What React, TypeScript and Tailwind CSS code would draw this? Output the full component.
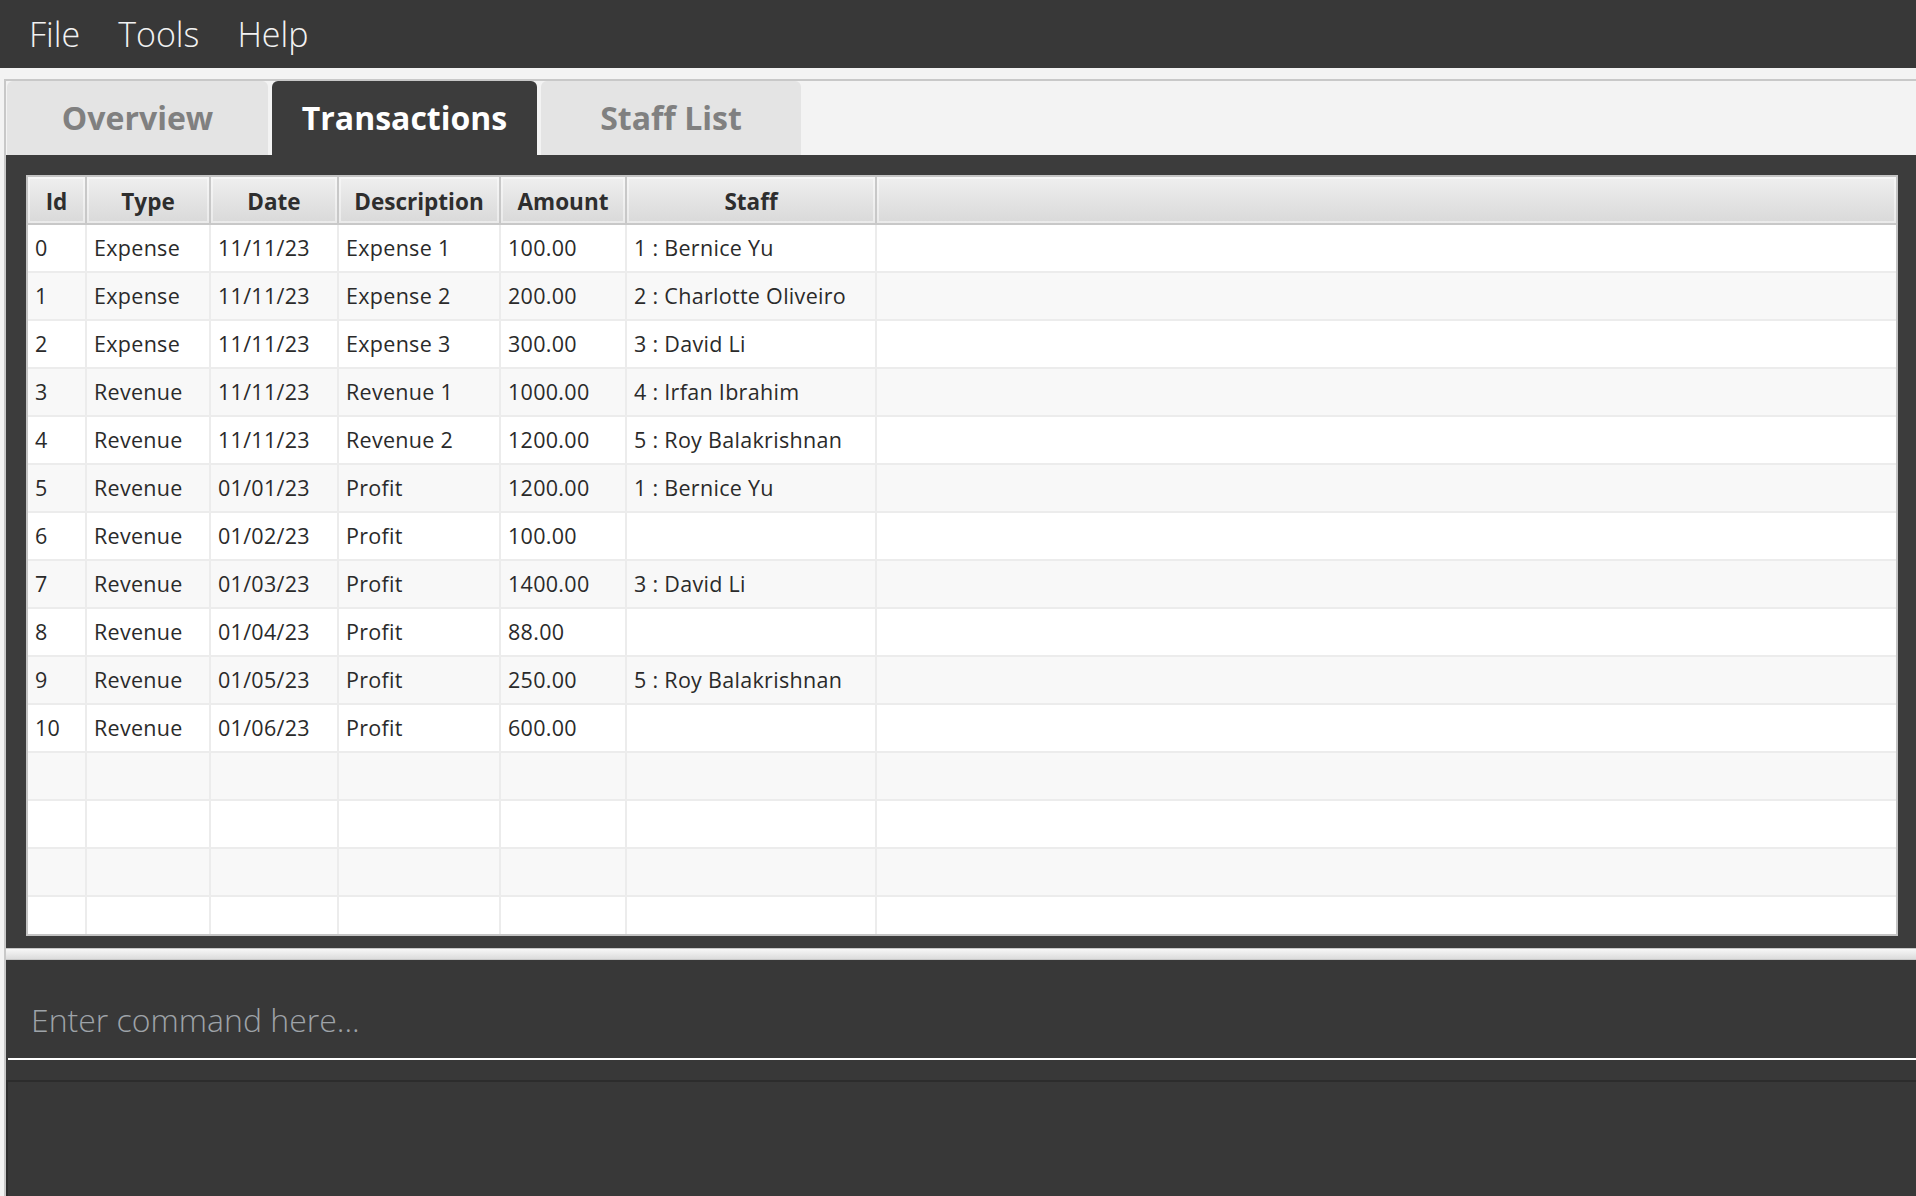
const rows = [
  ["0", "Expense", "11/11/23", "Expense 1", "100.00", "1 : Bernice Yu"],
  ["1", "Expense", "11/11/23", "Expense 2", "200.00", "2 : Charlotte Oliveiro"],
  ["2", "Expense", "11/11/23", "Expense 3", "300.00", "3 : David Li"],
  ["3", "Revenue", "11/11/23", "Revenue 1", "1000.00", "4 : Irfan Ibrahim"],
  ["4", "Revenue", "11/11/23", "Revenue 2", "1200.00", "5 : Roy Balakrishnan"],
  ["5", "Revenue", "01/01/23", "Profit", "1200.00", "1 : Bernice Yu"],
  ["6", "Revenue", "01/02/23", "Profit", "100.00", ""],
  ["7", "Revenue", "01/03/23", "Profit", "1400.00", "3 : David Li"],
  ["8", "Revenue", "01/04/23", "Profit", "88.00", ""],
  ["9", "Revenue", "01/05/23", "Profit", "250.00", "5 : Roy Balakrishnan"],
  ["10", "Revenue", "01/06/23", "Profit", "600.00", ""],
  ["", "", "", "", "", ""],
  ["", "", "", "", "", ""],
  ["", "", "", "", "", ""],
  ["", "", "", "", "", ""],
];

const columns = [
  { label: "Id", width: "w-[59px]" },
  { label: "Type", width: "w-[124px]" },
  { label: "Date", width: "w-[128px]" },
  { label: "Description", width: "w-[162px]" },
  { label: "Amount", width: "w-[126px]" },
  { label: "Staff", width: "w-[250px]" },
];

function Tab({ label, active, width }: { label: string; active?: boolean; width: string }) {
  return (
    <div
      className={`${width} h-[74px] rounded-t-[6px] flex items-center justify-center text-[32px] font-bold ${
        active ? "bg-[#3c3c3c] text-white" : "bg-[#e4e4e4] text-[#808080]"
      }`}
    >
      {label}
    </div>
  );
}

function TransactionTable() {
  return (
    <div className="h-full bg-white border-2 border-[#c4c4c4] overflow-hidden flex flex-col">
      <div className="flex h-[48px] shrink-0 border-b-2 border-[#c8c8c8]">
        {columns.map((c) => (
          <div
            key={c.label}
            className={`${c.width} shrink-0 flex items-center justify-center pt-[4px] border-r-2 border-[#c8c8c8] bg-linear-to-b from-[#efefef] to-[#d9d9d9] shadow-[inset_0_0_0_2px_rgba(255,255,255,0.45)] text-[22.5px] font-bold text-[#2e2e2e]`}
          >
            {c.label}
          </div>
        ))}
        <div className="flex-1 bg-linear-to-b from-[#efefef] to-[#d9d9d9] shadow-[inset_0_0_0_2px_rgba(255,255,255,0.45)]" />
      </div>
      {rows.map((r, i) => (
        <div
          key={i}
          className={`flex h-[48px] shrink-0 border-b-2 border-[#ececec] ${i % 2 === 0 ? "bg-white" : "bg-[#f8f8f8]"}`}
        >
          {columns.map((c, j) => (
            <div
              key={c.label}
              className={`${c.width} shrink-0 flex items-center pl-[7px] border-r-2 border-[#ececec] text-[21.5px] tracking-[0.3px] text-[#2a2a2a] whitespace-nowrap`}
            >
              {r[j]}
            </div>
          ))}
          <div className="flex-1" />
        </div>
      ))}
    </div>
  );
}

export default function App() {
  return (
    <div className="w-[1916px] h-[1196px] overflow-hidden bg-[#f3f3f3] flex flex-col font-['Open_Sans','Noto_Sans',sans-serif]">
      <div className="h-[68px] shrink-0 bg-[#383838] flex items-center gap-[38px] pl-[29px] text-[34px] font-light text-[#f2f2f2]">
        <span>File</span>
        <span>Tools</span>
        <span>Help</span>
      </div>
      <div className="flex-1 flex flex-col ml-[4px] mt-[11px] border-l-2 border-[#c8c8c8]">
        <div className="border-t-2 border-[#c8c8c8] flex items-end gap-[4px] pl-[1px] h-[76px] shrink-0">
          <Tab label="Overview" width="w-[261px]" />
          <Tab label="Transactions" width="w-[265px]" active />
          <Tab label="Staff List" width="w-[260px]" />
        </div>
        <div className="h-[793px] shrink-0 bg-[#3c3c3c] pt-[20px] pl-[20px] pr-[18px] pb-[12px]">
          <TransactionTable />
        </div>
        <div className="h-[12px] shrink-0 bg-linear-to-b from-[#f7f7f7] to-[#dcdcdc] border-y border-[#c8c8c8]" />
        <div className="h-[120px] shrink-0 bg-[#383838] flex flex-col">
          <div className="flex-1 flex items-end pl-[25px] pb-[14px]">
            <span className="text-[32px] font-light text-[#9ea3a8]">Enter command here...</span>
          </div>
          <div className="ml-[2px] h-[2px] bg-white" />
          <div className="h-[20px]" />
        </div>
        <div className="flex-1 bg-[#383838] border-t-2 border-l-2 border-[#2c2c2c]" />
      </div>
    </div>
  );
}
